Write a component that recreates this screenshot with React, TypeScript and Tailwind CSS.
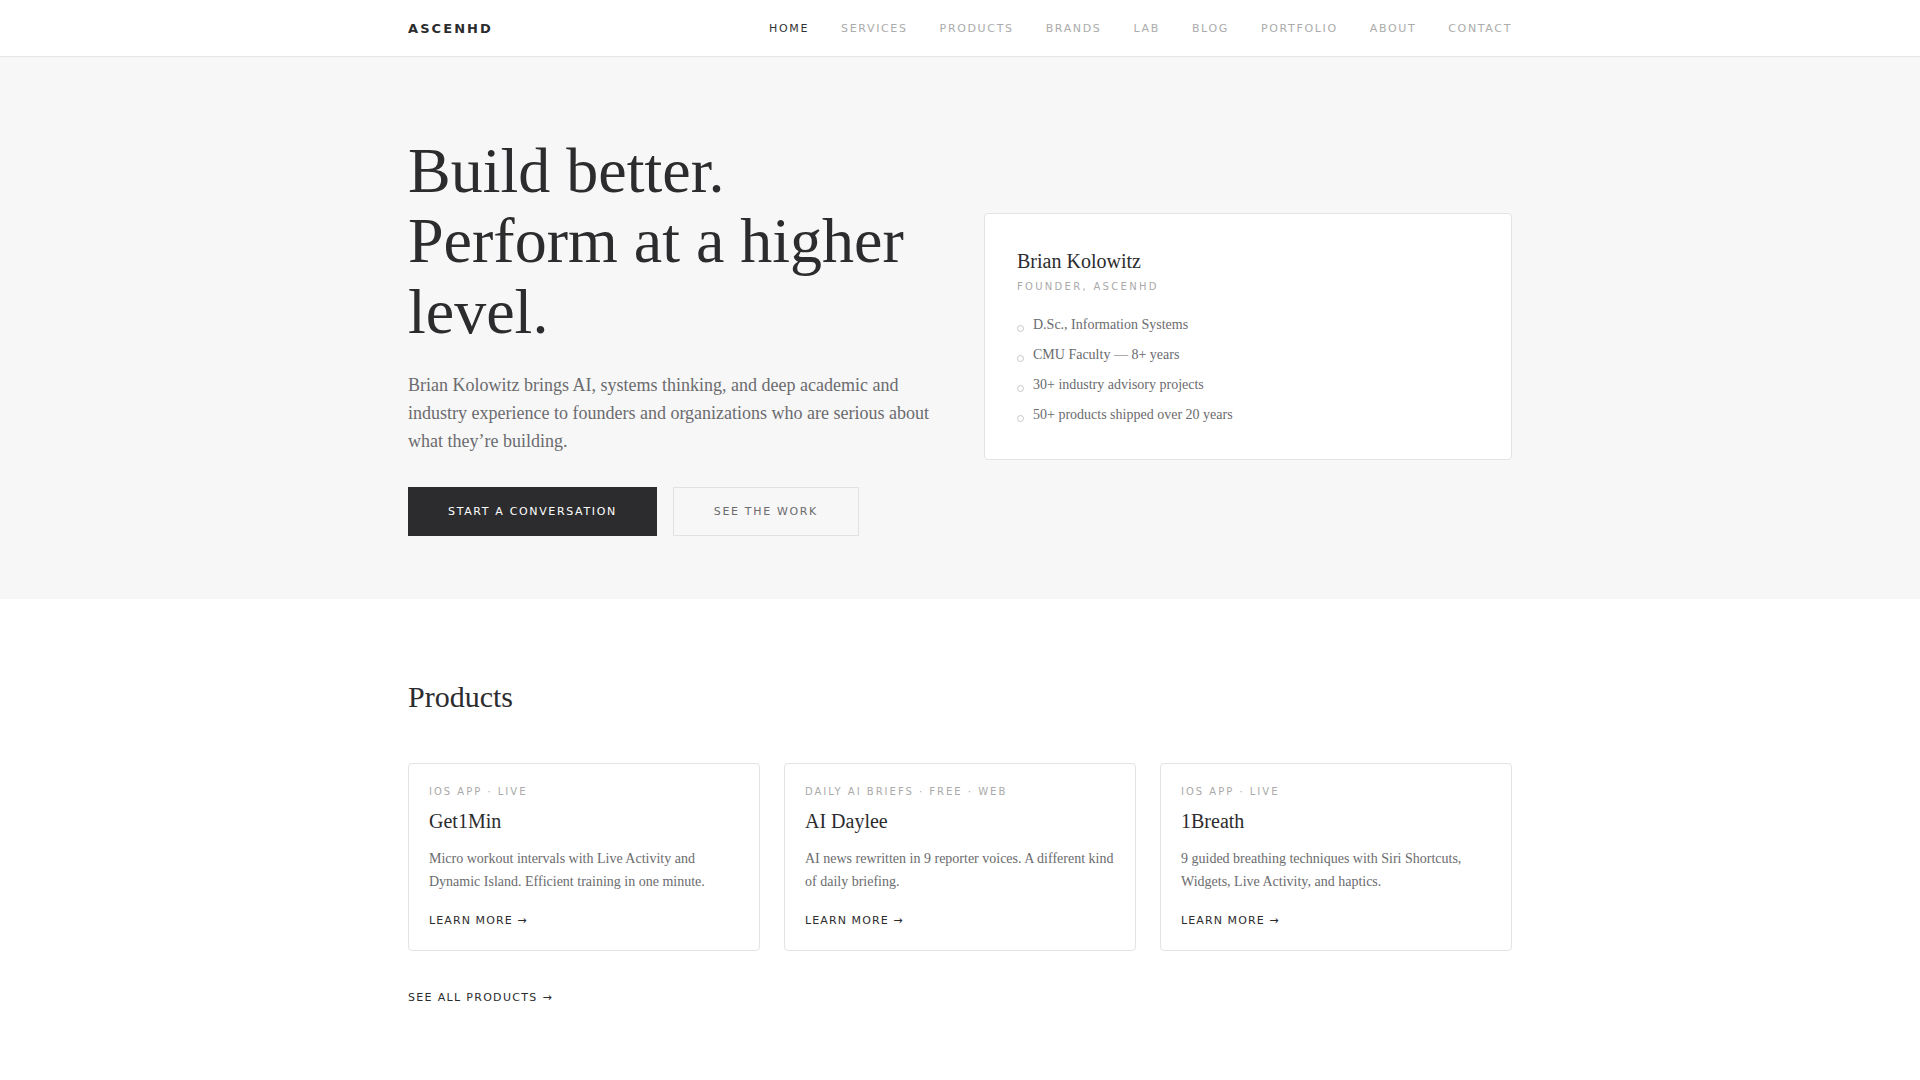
import React from 'react';

const navItems = ['Home', 'Services', 'Products', 'Brands', 'Lab', 'Blog', 'Portfolio', 'About', 'Contact'];

const credentials = [
  'D.Sc., Information Systems',
  'CMU Faculty — 8+ years',
  '30+ industry advisory projects',
  '50+ products shipped over 20 years',
];

const products = [
  {
    label: 'iOS App · Live',
    name: 'Get1Min',
    desc: 'Micro workout intervals with Live Activity and Dynamic Island. Efficient training in one minute.',
  },
  {
    label: 'Daily AI Briefs · Free · Web',
    name: 'AI Daylee',
    desc: 'AI news rewritten in 9 reporter voices. A different kind of daily briefing.',
  },
  {
    label: 'iOS App · Live',
    name: '1Breath',
    desc: '9 guided breathing techniques with Siri Shortcuts, Widgets, Live Activity, and haptics.',
  },
];

const sans = "font-['DejaVu_Sans',sans-serif]";
const serif = "font-['Liberation_Serif',serif]";

export default function App() {
  return (
    <div className={`min-h-screen bg-white text-[#2c2c2e] ${serif}`}>
      {/* Header */}
      <header className="h-[57px] bg-white border-b border-[#e6e6e6]">
        <div className="max-w-[1200px] mx-auto px-12 h-full flex items-center justify-between pt-[2px]">
          <span className={`${sans} text-[13px] font-bold tracking-[0.16em] text-[#2c2c2e]`}>ASCENHD</span>
          <nav className="flex items-center gap-8">
            {navItems.map((item, i) => (
              <a
                key={item}
                className={`${sans} text-[11px] uppercase tracking-[0.15em] ${i === 0 ? 'text-[#333]' : 'text-[#ababab]'}`}
              >
                {item}
              </a>
            ))}
          </nav>
        </div>
      </header>

      {/* Hero */}
      <section className="bg-[#f7f7f7]">
        <div className="max-w-[1200px] mx-auto px-12 pt-[79px] pb-[63px] grid grid-cols-2 gap-12 items-center">
          <div>
            <h1 className="text-[64px] leading-[1.1] font-normal text-[#2c2c2e]">
              Build better.
              <br />
              Perform at a higher level.
            </h1>
            <p className="mt-6 text-[18px] leading-7 text-[#6b6b6e]">
              Brian Kolowitz brings AI, systems thinking, and deep academic and industry experience to founders and
              organizations who are serious about what they’re building.
            </p>
            <div className="mt-8 flex gap-4">
              <button className={`${sans} bg-[#2c2c2e] text-white text-[11px] uppercase tracking-[0.15em] px-10 py-4 leading-[15px]`}>
                Start a Conversation
              </button>
              <button className={`${sans} border border-[#e2e2e2] text-[#6b6b6e] text-[11px] uppercase tracking-[0.15em] px-10 py-4 leading-[15px]`}>
                See the Work
              </button>
            </div>
          </div>

          <div className="bg-white border border-[#e4e4e4] rounded-[4px] px-8 py-[33px]">
            <h3 className="text-[20px] leading-7 font-normal text-[#2c2c2e]">Brian Kolowitz</h3>
            <p className={`${sans} mt-1 text-[10px] uppercase tracking-[0.23em] text-[#aaaaaa]`}>Founder, AscenHD</p>
            <ul className="mt-5 space-y-2">
              {credentials.map((c) => (
                <li key={c} className="flex text-[14px] leading-[22px] text-[#6b6b6e]">
                  <span className="self-start mt-[11px] mr-[9px] w-[7px] h-[7px] rounded-full border border-[#c8c8c8] shrink-0" />
                  {c}
                </li>
              ))}
            </ul>
          </div>
        </div>
      </section>

      {/* Products */}
      <section className="bg-white">
        <div className="max-w-[1200px] mx-auto px-12 pt-20 pb-20">
          <h2 className="text-[30px] leading-9 font-normal text-[#2c2c2e]">Products</h2>
          <div className="mt-12 grid grid-cols-3 gap-6">
            {products.map((p) => (
              <div key={p.name} className="border border-[#e4e4e4] rounded-[4px] p-5">
                <p className={`${sans} text-[10px] uppercase tracking-[0.2em] text-[#aaaaaa]`}>{p.label}</p>
                <h3 className="mt-2 text-[20px] leading-7 font-normal text-[#2c2c2e]">{p.name}</h3>
                <p className="mt-3 text-[14px] leading-[23px] text-[#6b6b6e]">{p.desc}</p>
                <a className={`${sans} mt-5 block text-[11px] uppercase tracking-[0.1em] text-[#2c2c2e]`}>
                  Learn more →
                </a>
              </div>
            ))}
          </div>
          <a className={`${sans} mt-[39px] block text-[11px] uppercase tracking-[0.12em] text-[#2c2c2e]`}>
            See all products →
          </a>
        </div>
      </section>
    </div>
  );
}
